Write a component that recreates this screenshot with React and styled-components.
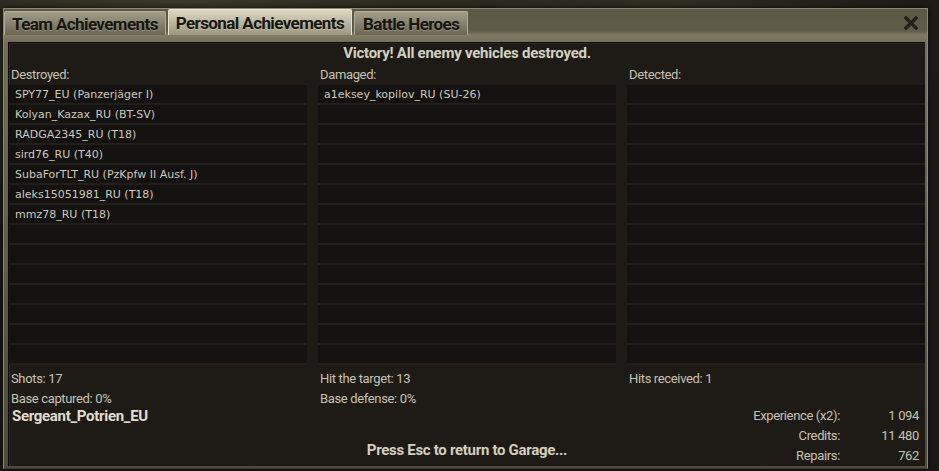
import React from "react";
import styled, { createGlobalStyle } from "styled-components";

const GlobalStyle = createGlobalStyle`
  html, body {
    margin: 0;
    padding: 0;
  }
  body {
    width: 939px;
    height: 471px;
    overflow: hidden;
    background:
      radial-gradient(ellipse at 20% 0%, #3a3b2c 0%, transparent 40%),
      radial-gradient(ellipse at 70% 0%, #2e3024 0%, transparent 35%),
      #1a1915;
    font-family: Roboto, "Liberation Sans", sans-serif;
  }
`;

const Window = styled.div`
  margin: 8px 0 0 3px;
  width: 925px;
  height: 461px;
  box-sizing: border-box;
  display: flex;
  flex-direction: column;
  background: linear-gradient(#5c5846 0px, #605c4a 22px, #807c66 26px, #726e5a 34px, #4e4a3c 100%);
  border: 1px solid #8c8872;
  border-bottom-color: #3c392e;
  box-shadow: 0 0 6px rgba(0, 0, 0, 0.8);
`;

const TabBar = styled.div`
  display: flex;
  align-items: flex-end;
  gap: 2px;
  height: 26px;
  padding: 0 8px 0 0;
`;

const Tab = styled.div`
  height: ${(p) => (p.$active ? "26px" : "24px")};
  box-sizing: border-box;
  padding: 0 ${(p) => p.$pad}px;
  display: flex;
  align-items: center;
  font-weight: bold;
  font-size: 17px;
  letter-spacing: -0.6px;
  color: #16150f;
  background: ${(p) =>
    p.$active
      ? "linear-gradient(#dcd8c2, #b4b098 60%, #9c9880)"
      : "linear-gradient(#a29e88, #807c68 60%, #6a6654)"};
  border: 1px solid ${(p) => (p.$active ? "#e8e4cc" : "#b0ac94")};
  border-bottom: none;
  border-radius: 2px 2px 0 0;
  text-shadow: 0 1px 0 rgba(255, 255, 240, 0.2);
`;

const Close = styled.div`
  margin-left: auto;
  align-self: center;
  display: flex;
  align-items: center;
  justify-content: center;
  width: 16px;
  height: 16px;
  margin-top: 2px;
`;

const Panel = styled.div`
  flex: 1;
  margin: 7px 2px 2px 4px;
  background: #1e1b16;
  border-top: 1px solid #0c0b09;
  border-left: 1px solid #0c0b09;
  box-shadow: inset 1px 1px 0 #2c2922;
  display: flex;
  flex-direction: column;
  color: #c6c2b2;
  font-size: 13px;
  letter-spacing: -0.35px;
`;

const Title = styled.div`
  height: 21px;
  line-height: 21px;
  text-align: center;
  font-weight: bold;
  font-size: 15px;
  letter-spacing: -0.25px;
  color: #d4d0c0;
`;

const Columns = styled.div`
  display: grid;
  grid-template-columns: repeat(3, 1fr);
  column-gap: 11px;
`;

const Column = styled.div`
  display: flex;
  flex-direction: column;
`;

const Label = styled.div`
  height: 21px;
  line-height: 21px;
  padding-left: 2px;
`;

const List = styled.div`
  height: 280px;
  background: #141210;
  display: flex;
  flex-direction: column;
`;

const Row = styled.div`
  height: 20px;
  box-sizing: border-box;
  line-height: 19px;
  padding-left: 6px;
  border-bottom: 2px solid #221f1a;
  font-family: "DejaVu Sans", "Liberation Sans", sans-serif;
  font-size: 11px;
  letter-spacing: 0;
  color: #cdc9bb;
  white-space: nowrap;
`;

const Stat = styled.div`
  height: 20px;
  line-height: 20px;
  padding-left: 2px;
  margin-top: ${(p) => (p.$first ? "4px" : "0")};
`;

const Bottom = styled.div`
  display: grid;
  grid-template-columns: 1fr auto 1fr;
  margin-top: -3px;
  height: 60px;
`;

const Name = styled.div`
  height: 20px;
  line-height: 20px;
  padding-left: 3px;
  font-weight: bold;
  font-size: 15px;
  letter-spacing: -0.3px;
  color: #e2decf;
`;

const Hint = styled.div`
  align-self: end;
  margin-bottom: 7px;
  font-weight: bold;
  font-size: 15px;
  letter-spacing: -0.3px;
  color: #d4d0c0;
`;

const Totals = styled.div`
  justify-self: end;
  display: grid;
  grid-template-columns: auto 79px;
  grid-auto-rows: 20px;
  padding-right: 6px;
`;

const TotalCell = styled.div`
  line-height: 20px;
  text-align: right;
`;

const columns = [
  {
    label: "Destroyed:",
    rows: [
      "SPY77_EU (Panzerjäger I)",
      "Kolyan_Kazax_RU (BT-SV)",
      "RADGA2345_RU (T18)",
      "sird76_RU (T40)",
      "SubaForTLT_RU (PzKpfw II Ausf. J)",
      "aleks15051981_RU (T18)",
      "mmz78_RU (T18)",
    ],
    stats: ["Shots: 17", "Base captured: 0%"],
  },
  {
    label: "Damaged:",
    rows: ["a1eksey_kopilov_RU (SU-26)"],
    stats: ["Hit the target: 13", "Base defense: 0%"],
  },
  {
    label: "Detected:",
    rows: [],
    stats: ["Hits received: 1"],
  },
];

const totals = [
  ["Experience (x2):", "1 094"],
  ["Credits:", "11 480"],
  ["Repairs:", "762"],
];

const ROWS = 14;

export default function App() {
  return (
    <>
      <GlobalStyle />
      <Window>
        <TabBar>
          <Tab $pad={7}>Team Achievements</Tab>
          <Tab $pad={7} $active>
            Personal Achievements
          </Tab>
          <Tab $pad={8}>Battle Heroes</Tab>
          <Close>
            <svg width="14" height="14" viewBox="0 0 14 14">
              <path d="M2 2 L12 12 M12 2 L2 12" stroke="#24221c" strokeWidth="3.4" strokeLinecap="square" />
            </svg>
          </Close>
        </TabBar>
        <Panel>
          <Title>Victory! All enemy vehicles destroyed.</Title>
          <Columns>
            {columns.map((col) => (
              <Column key={col.label}>
                <Label>{col.label}</Label>
                <List>
                  {Array.from({ length: ROWS }, (_, i) => (
                    <Row key={i}>{col.rows[i] || ""}</Row>
                  ))}
                </List>
                {col.stats.map((s, i) => (
                  <Stat key={s} $first={i === 0}>
                    {s}
                  </Stat>
                ))}
              </Column>
            ))}
          </Columns>
          <Bottom>
            <Name>Sergeant_Potrien_EU</Name>
            <Hint>Press Esc to return to Garage...</Hint>
            <Totals>
              {totals.map(([k, v]) => (
                <React.Fragment key={k}>
                  <TotalCell>{k}</TotalCell>
                  <TotalCell>{v}</TotalCell>
                </React.Fragment>
              ))}
            </Totals>
          </Bottom>
        </Panel>
      </Window>
    </>
  );
}
